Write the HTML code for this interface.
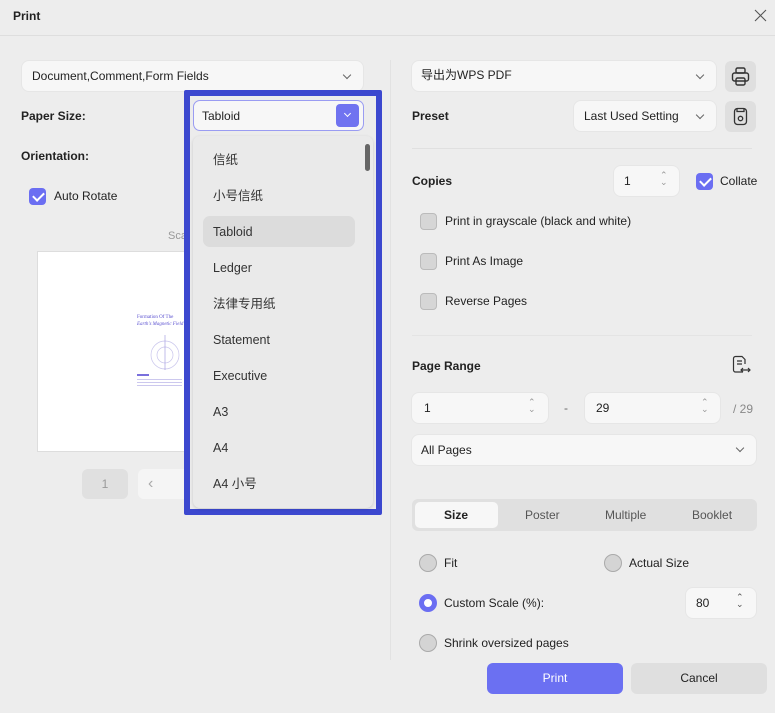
<!DOCTYPE html>
<html><head><meta charset="utf-8"><style>
*{box-sizing:border-box;margin:0;padding:0}
body{width:775px;height:713px;background:#ededed;font-family:"Liberation Sans","Noto Sans CJK SC",sans-serif;font-size:12px;line-height:15px;color:#222;position:relative;overflow:hidden}
.a{position:absolute}
.box{position:absolute;background:#f7f7f7;border-radius:7px;box-shadow:0 0 0 1px #e6e6e6}
.b{font-weight:bold;font-size:12px}
.chev{position:absolute;width:6px;height:6px;border-right:1.2px solid #666;border-bottom:1.2px solid #666;transform:rotate(45deg)}
.cb{position:absolute;width:17px;height:17px;border-radius:4px;background:#d6d6d6;border:1px solid #bbb}
.cbon{position:absolute;width:17px;height:17px;border-radius:4px;background:#6b6ef2}
.cbon:after{content:"";position:absolute;left:5.5px;top:2px;width:5px;height:9px;border-right:2px solid #fff;border-bottom:2px solid #fff;transform:rotate(45deg)}
.rd{position:absolute;width:18px;height:18px;border-radius:50%;background:#d4d4d4;border:1px solid #aaa}
.it{position:absolute;left:213px;font-size:12.5px;line-height:16px;height:16px;color:#333}
.sp{position:absolute;font-size:9px;color:#999;line-height:7px}
</style></head><body>
<div class="a b" style="left:13px;top:9px">Print</div>
<svg class="a" style="left:754px;top:9px" width="13" height="13" stroke="#555" stroke-width="1.1"><path d="M1 1L12 12M12 1L1 12"/></svg>
<div class="a" style="left:0;top:35px;width:775px;height:1px;background:#dedede"></div>
<div class="a" style="left:390px;top:60px;width:1px;height:600px;background:#e2e2e2"></div>

<!-- left -->
<div class="box" style="left:22px;top:61px;width:341px;height:30px"></div>
<div class="a" style="left:32px;top:69px">Document,Comment,Form Fields</div>
<div class="chev" style="left:344px;top:72px"></div>
<div class="a b" style="left:21px;top:109px">Paper Size:</div>
<div class="a b" style="left:21px;top:149px">Orientation:</div>
<div class="cbon" style="left:29px;top:188px"></div>
<div class="a" style="left:54px;top:189px">Auto Rotate</div>
<div class="a" style="left:168px;top:229px;color:#999;font-size:11px">Scale</div>
<div class="a" style="left:37px;top:251px;width:176px;height:201px;background:#fff;border:1px solid #ddd"></div>
<div class="a" style="left:137px;top:314px;font-size:5px;color:#5a50d0;font-family:'Liberation Serif',serif;line-height:7px">Formation Of The<br><i>Earth's Magnetic Field</i></div>
<svg class="a" style="left:140px;top:330px" width="50" height="50"><circle cx="25" cy="25" r="14" fill="none" stroke="#c8c4ec" stroke-width=".7"/><circle cx="25" cy="25" r="8" fill="none" stroke="#c8c4ec" stroke-width=".7"/><line x1="25" y1="5" x2="25" y2="40" stroke="#9990dd" stroke-width=".6"/></svg>
<div class="a" style="left:137px;top:374px;width:12px;height:2px;background:#7a70dd"></div>
<div class="a" style="left:137px;top:379px;width:45px;height:1px;background:#ccc8ee"></div>
<div class="a" style="left:137px;top:382px;width:45px;height:1px;background:#ccc8ee"></div>
<div class="a" style="left:137px;top:385px;width:45px;height:1px;background:#ccc8ee"></div>
<div class="a" style="left:82px;top:469px;width:46px;height:30px;background:#e0e0e0;border-radius:6px;color:#999;text-align:center;line-height:30px">1</div>
<div class="a" style="left:138px;top:469px;width:60px;height:30px;background:#f5f5f5;border-radius:6px;color:#aaa;padding-left:10px;line-height:29px;font-size:16px">‹</div>
<div class="a" style="left:190px;top:477px">1</div>

<!-- dropdown overlay -->
<div class="a" style="left:184px;top:90px;width:198px;height:425px;border:6px solid #3c48cf;border-radius:2px;background:#ececec"></div>
<div class="a" style="left:193px;top:100px;width:171px;height:31px;border:1.5px solid #9a9cf2;border-radius:7px;background:#f7f7f7"></div>
<div class="a" style="left:202px;top:109px">Tabloid</div>
<div class="a" style="left:336px;top:104px;width:23px;height:23px;background:#7073f0;border-radius:4px"></div>
<div class="chev" style="left:344.5px;top:111px;border-color:#fff;width:5px;height:5px"></div>
<div class="a" style="left:193px;top:136px;width:180px;height:372px;background:#eaeaea;border-radius:7px;box-shadow:0 1px 3px rgba(0,0,0,.15)"></div>
<div class="a" style="left:365px;top:144px;width:5px;height:27px;background:#666;border-radius:3px"></div>
<div class="a" style="left:203px;top:216px;width:152px;height:31px;background:#dcdcdc;border-radius:7px"></div>
<div class="it" style="top:152px">信纸</div>
<div class="it" style="top:188px">小号信纸</div>
<div class="it" style="top:224px">Tabloid</div>
<div class="it" style="top:260px">Ledger</div>
<div class="it" style="top:296px">法律专用纸</div>
<div class="it" style="top:332px">Statement</div>
<div class="it" style="top:368px">Executive</div>
<div class="it" style="top:404px">A3</div>
<div class="it" style="top:440px">A4</div>
<div class="it" style="top:476px">A4 小号</div>

<!-- right -->
<div class="box" style="left:412px;top:61px;width:304px;height:30px"></div>
<div class="a" style="left:421px;top:68px">导出为WPS PDF</div>
<div class="chev" style="left:697px;top:72px"></div>
<div class="a" style="left:725px;top:61px;width:31px;height:31px;background:#dfdfdf;border-radius:6px"></div>
<svg class="a" style="left:730px;top:66px" width="21" height="21" fill="none" stroke="#333" stroke-width="1.4"><rect x="6" y="2" width="9" height="5" rx="1.5"/><rect x="2.5" y="7" width="16" height="8" rx="2"/><rect x="6" y="12" width="9" height="7" rx="1.5"/></svg>
<div class="a b" style="left:412px;top:109px">Preset</div>
<div class="box" style="left:574px;top:101px;width:142px;height:30px"></div>
<div class="a" style="left:584px;top:109px">Last Used Setting</div>
<div class="chev" style="left:697px;top:112px"></div>
<div class="a" style="left:725px;top:101px;width:31px;height:31px;background:#dfdfdf;border-radius:6px"></div>
<svg class="a" style="left:730px;top:106px" width="21" height="21" fill="none" stroke="#333" stroke-width="1.3"><rect x="4.5" y="2.5" width="12" height="16" rx="3"/><path d="M7 2.5v3h7v-3"/><circle cx="10.5" cy="12.5" r="2.2"/></svg>
<div class="a" style="left:412px;top:148px;width:340px;height:1px;background:#e0e0e0"></div>
<div class="a b" style="left:412px;top:174px">Copies</div>
<div class="box" style="left:614px;top:166px;width:65px;height:30px"></div>
<div class="a" style="left:624px;top:174px">1</div>
<div class="sp" style="left:660px;top:172px">⌃<br>⌄</div>
<div class="cbon" style="left:696px;top:173px"></div>
<div class="a" style="left:720px;top:174px">Collate</div>
<div class="cb" style="left:420px;top:213px"></div><div class="a" style="left:445px;top:214px">Print in grayscale (black and white)</div>
<div class="cb" style="left:420px;top:253px"></div><div class="a" style="left:445px;top:254px">Print As Image</div>
<div class="cb" style="left:420px;top:293px"></div><div class="a" style="left:445px;top:294px">Reverse Pages</div>
<div class="a" style="left:412px;top:335px;width:340px;height:1px;background:#e4e4e4"></div>
<div class="a b" style="left:412px;top:359px">Page Range</div>
<svg class="a" style="left:731px;top:355px" width="20" height="20" fill="none" stroke="#333" stroke-width="1.2"><path d="M12 17H4.5a2 2 0 0 1-2-2V3.5a2 2 0 0 1 2-2H11l3 3V9"/><path d="M6 6h5M6 9h5"/><path d="M10 15h9M12 13l-2 2 2 2M17 13l2 2-2 2"/></svg>
<div class="box" style="left:412px;top:393px;width:136px;height:30px"></div>
<div class="a" style="left:424px;top:401px">1</div>
<div class="sp" style="left:528px;top:399px">⌃<br>⌄</div>
<div class="a" style="left:564px;top:401px;color:#666">-</div>
<div class="box" style="left:585px;top:393px;width:135px;height:30px"></div>
<div class="a" style="left:596px;top:401px">29</div>
<div class="sp" style="left:701px;top:399px">⌃<br>⌄</div>
<div class="a" style="left:733px;top:402px;color:#888">/ 29</div>
<div class="box" style="left:412px;top:435px;width:344px;height:30px"></div>
<div class="a" style="left:421px;top:443px">All Pages</div>
<div class="chev" style="left:737px;top:445px"></div>
<div class="a" style="left:412px;top:499px;width:345px;height:32px;background:#e0e0e0;border-radius:6px"></div>
<div class="a" style="left:415px;top:502px;width:83px;height:26px;background:#f7f7f7;border-radius:5px"></div>
<div class="a b" style="left:444px;top:508px">Size</div>
<div class="a" style="left:525px;top:508px;color:#555">Poster</div>
<div class="a" style="left:605px;top:508px;color:#555">Multiple</div>
<div class="a" style="left:692px;top:508px;color:#555">Booklet</div>
<div class="rd" style="left:419px;top:554px"></div><div class="a" style="left:444px;top:556px">Fit</div>
<div class="rd" style="left:604px;top:554px"></div><div class="a" style="left:629px;top:556px">Actual Size</div>
<div class="a" style="left:419px;top:594px;width:18px;height:18px;border-radius:50%;background:#fff;border:5px solid #6b6ef2"></div>
<div class="a" style="left:444px;top:596px">Custom Scale (%):</div>
<div class="box" style="left:686px;top:588px;width:70px;height:30px"></div>
<div class="a" style="left:696px;top:596px">80</div>
<div class="sp" style="left:736px;top:594px;color:#555">⌃<br>⌄</div>
<div class="rd" style="left:419px;top:634px"></div><div class="a" style="left:444px;top:636px">Shrink oversized pages</div>
<div class="a" style="left:487px;top:663px;width:136px;height:31px;background:#6b70f2;border-radius:6px;color:#fff;text-align:center;line-height:31px">Print</div>
<div class="a" style="left:631px;top:663px;width:136px;height:31px;background:#dfdfdf;border-radius:6px;text-align:center;line-height:31px">Cancel</div>
</body></html>
